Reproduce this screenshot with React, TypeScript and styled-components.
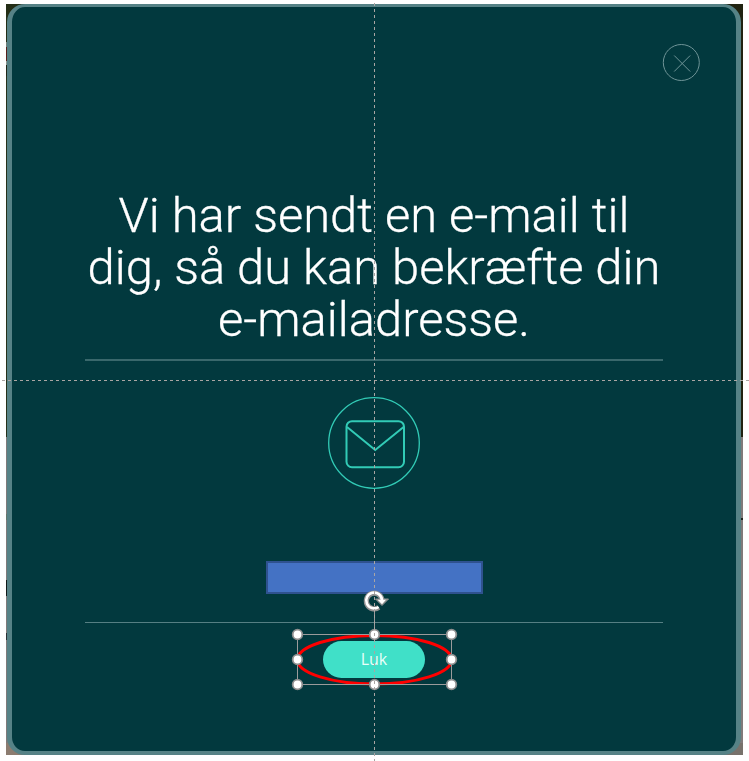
import React from "react";
import styled, { createGlobalStyle } from "styled-components";

const GlobalStyle = createGlobalStyle`
  * { box-sizing: border-box; }
  body { margin: 0; background: #fff; }
`;

const Stage = styled.main`
  position: relative;
  width: 749px;
  height: 761px;
  padding: 4px 6px 6px;
  overflow: hidden;
`;

const Backdrop = styled.div`
  height: 751px;
  padding: 0 2px 0 1px;
  background:
    linear-gradient(90deg, #8c7c70, #77716b) 0 100% / 100% 12px no-repeat,
    linear-gradient(
      #232d16 0 38px,
      #73817b 38px 43px,
      #57201b 43px 57px,
      #8a9690 57px 61px,
      #202617 61px 72px,
      #26301a 72px 433px,
      #807a7a 433px 510px,
      #66776b 510px 516px,
      #807a7a 516px 576px,
      #111918 576px 592px,
      #807a7a 592px 629px,
      #2b3034 629px 636px,
      #807a7a 636px
    ) 0 0 / 30px 100% no-repeat,
    linear-gradient(#202311 0 433px, #807a7a 433px 514px, #22251f 514px 516px, #807a7a 516px) 100% 0 / 30px 100% no-repeat;
`;

const Card = styled.section`
  display: flex;
  flex-direction: column;
  align-items: center;
  height: 751px;
  padding: 37px 36px 0 73px;
  border: 4px solid #568286;
  border-top-width: 3px;
  border-left-width: 5px;
  border-right-width: 5px;
  border-radius: 18px;
  background: #02393e;
`;

const Content = styled.div`
  display: flex;
  flex-direction: column;
  align-items: center;
  align-self: flex-start;
  width: 578px;
`;

const CloseButton = styled.button`
  align-self: flex-end;
  width: 38px;
  height: 38px;
  padding: 0;
  border: 0;
  background: none;
  svg { display: block; }
`;

const Heading = styled.h1`
  margin: 108px -20px 13px;
  font: 300 48.9px/52px Roboto, sans-serif;
  color: #fff;
  -webkit-text-stroke: 0.3px #fff;
  text-align: center;
  white-space: nowrap;
`;

const Rule = styled.hr<{ $weight: number }>`
  width: 100%;
  height: ${(p) => p.$weight}px;
  margin: 0;
  border: 0;
  background: ${(p) => (p.$weight > 1 ? "#3a686c" : "#567f83")};
`;

const MailIcon = styled.svg`
  display: block;
  margin-top: 36px;
`;

const Field = styled.div`
  width: 217px;
  height: 33px;
  margin: 71px 0 28px;
  border: 2px solid #2f528f;
  background: #4472c4;
`;

const Action = styled.button`
  width: 102px;
  height: 37px;
  margin-top: 18px;
  padding: 0;
  border: 0;
  border-radius: 19px;
  background: #40e0c8;
  color: #e9fffa;
  font: 400 16px/37px "Open Sans", sans-serif;
  text-align: center;
`;

const Overlay = styled.svg`
  position: absolute;
  inset: 0;
  pointer-events: none;
`;

const HANDLES = [
  [297.5, 634.5], [374.5, 634.5], [451.5, 634.5],
  [297.5, 659.5], [451.5, 659.5],
  [297.5, 684.5], [374.5, 684.5], [451.5, 684.5],
];

function SelectionOverlay() {
  return (
    <Overlay width="749" height="761" fill="none">
      <ellipse cx="374.5" cy="659.7" rx="77" ry="24.3" stroke="#f00" strokeWidth="3" />
      <path d="M374.5 610V634M297.5 634.5H451.5V684.5H297.5Z" stroke="#9b9b9b" />
      {HANDLES.map(([x, y]) => (
        <circle key={`${x}-${y}`} cx={x} cy={y} r="4.8" fill="#fff" stroke="#8e8e8e" strokeWidth="1.8" />
      ))}
      <g strokeLinejoin="round">
        <path d="M378.8 607.4A7.9 7.9 0 1 1 382 599.5" stroke="#929292" strokeWidth="5.2" />
        <path d="M375.5 599H388.5L382 605.5Z" fill="#929292" stroke="#929292" />
        <path d="M378.6 607A7.9 7.9 0 1 1 382 600" stroke="#fff" strokeWidth="2.6" />
        <path d="M377.6 599.8H386L382 604.2Z" fill="#fff" />
      </g>
      <path d="M374.5 3V761" stroke="#aaa5a3" strokeDasharray="3 3" />
      <path d="M2 380.5H749" stroke="#aaa5a3" strokeDasharray="3 3" />
    </Overlay>
  );
}

export default function App() {
  return (
    <>
      <GlobalStyle />
      <Stage>
        <Backdrop>
          <Card>
            <CloseButton aria-label="Luk">
              <svg width="38" height="38" fill="none" stroke="#6f9497">
                <circle cx="19.3" cy="18.5" r="18" />
                <path d="M12.2 11.5L28.2 27.5M28.2 11.5L12.2 27.5" />
              </svg>
            </CloseButton>
            <Content>
              <Heading>
                Vi har sendt en e-mail til
                <br />
                dig, så du kan bekræfte din
                <br />
                e-mailadresse.
              </Heading>
              <Rule $weight={2} />
              <MailIcon width="92" height="93" fill="none" stroke="#32cbb6">
                <circle cx="46" cy="46" r="45.3" strokeWidth="1.3" />
                <rect x="18.5" y="24.2" width="57.5" height="46" rx="5.5" strokeWidth="2" />
                <path d="M19 30L47.2 53L75.6 30" strokeWidth="2" />
              </MailIcon>
              <Field />
              <Rule $weight={1} />
              <Action>Luk</Action>
            </Content>
          </Card>
        </Backdrop>
        <SelectionOverlay />
      </Stage>
    </>
  );
}
